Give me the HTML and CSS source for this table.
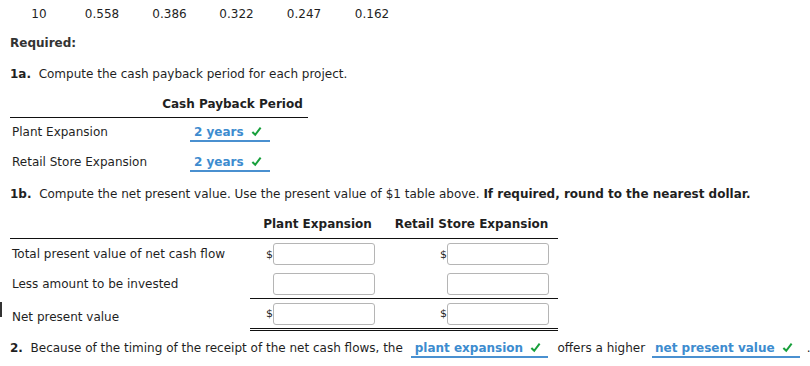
FILE: index.html
```html
<!DOCTYPE html>
<html>
<head>
<meta charset="utf-8">
<link rel="stylesheet" href="styles.css">
</head>
<body>
<div class="page">
  <div class="pv-row">
    <span class="pv c1">10</span>
    <span class="pv c2">0.558</span>
    <span class="pv c3">0.386</span>
    <span class="pv c4">0.322</span>
    <span class="pv c5">0.247</span>
    <span class="pv c6">0.162</span>
  </div>
  <div class="required">Required:</div>
  <div class="q q1a"><b>1a.</b>&nbsp; Compute the cash payback period for each project.</div>

  <div class="pb-table">
    <div class="pb-head">
      <span class="pb-label"></span>
      <span class="pb-col hd">Cash Payback Period</span>
    </div>
    <div class="pb-row">
      <span class="pb-label">Plant Expansion</span>
      <span class="pb-col"><span class="ans ans-pb">2 years <svg class="chk" viewBox="0 0 12 12"><path d="M1.5 6.5 L4.6 9.6 L10.5 1.8" /></svg></span></span>
    </div>
    <div class="pb-row">
      <span class="pb-label">Retail Store Expansion</span>
      <span class="pb-col"><span class="ans ans-pb">2 years <svg class="chk" viewBox="0 0 12 12"><path d="M1.5 6.5 L4.6 9.6 L10.5 1.8" /></svg></span></span>
    </div>
  </div>

  <div class="q q1b"><b>1b.</b>&nbsp; Compute the net present value. Use the present value of $1 table above. <b>If required, round to the nearest dollar.</b></div>

  <div class="npv">
    <div class="npv-head">
      <span class="npv-label"></span>
      <span class="npv-c1 hd">Plant Expansion</span>
      <span class="npv-c2 hd">Retail Store Expansion</span>
    </div>
    <div class="npv-row">
      <span class="npv-label">Total present value of net cash flow</span>
      <span class="npv-vals">
        <span class="npv-c1 cell"><span class="dollar">$</span><span class="box"></span></span>
        <span class="npv-c2 cell"><span class="dollar">$</span><span class="box"></span></span>
      </span>
    </div>
    <div class="npv-row">
      <span class="npv-label">Less amount to be invested</span>
      <span class="npv-vals single">
        <span class="npv-c1 cell"><span class="box"></span></span>
        <span class="npv-c2 cell"><span class="box"></span></span>
      </span>
    </div>
    <div class="npv-row last">
      <span class="cursor"></span>
      <span class="npv-label">Net present value</span>
      <span class="npv-vals double">
        <span class="npv-c1 cell"><span class="dollar">$</span><span class="box"></span></span>
        <span class="npv-c2 cell"><span class="dollar">$</span><span class="box"></span></span>
      </span>
    </div>
  </div>

  <div class="q q2"><b>2.</b>&nbsp; Because of the timing of the receipt of the net cash flows, the <span class="ans ans-a">plant expansion <svg class="chk" viewBox="0 0 12 12"><path d="M1.5 6.5 L4.6 9.6 L10.5 1.8" /></svg></span> offers a higher <span class="ans ans-b">net present value <svg class="chk" viewBox="0 0 12 12"><path d="M1.5 6.5 L4.6 9.6 L10.5 1.8" /></svg></span> .</div>
</div>
</body>
</html>
```

FILE: styles.css
```css
html, body {
  margin: 0;
  padding: 0;
  background: #ffffff;
}
body {
  font-family: "DejaVu Sans", Verdana, sans-serif;
  font-size: 12px;
  color: #1f1f1f;
  width: 810px;
  height: 366px;
  overflow: hidden;
}
.page {
  padding: 0 0 0 10px;
  position: relative;
}
b, .hd { font-weight: bold; }

.pv-row {
  display: flex;
  height: 28px;
  line-height: 28px;
}
.pv { text-align: center; }
.c1 { width: 58px; }
.c2 { width: 68px; }
.c3 { width: 67px; }
.c4 { width: 67px; }
.c5 { width: 68px; }
.c6 { width: 68px; }

.required {
  margin-top: 5px;
  height: 20px;
  line-height: 20px;
  font-weight: bold;
  color: #333;
}
.q {
  height: 20px;
  line-height: 20px;
  white-space: nowrap;
}
.q1a { margin-top: 11px; }

/* payback table */
.pb-table { width: 298px; margin-top: 9px; }
.pb-head {
  display: flex;
  height: 24px;
  line-height: 22px;
  border-bottom: 1px solid #111;
}
.pb-row {
  display: flex;
  height: 30px;
  line-height: 28px;
}
.pb-label { width: 147px; padding-left: 2px; box-sizing: border-box; }
.pb-col { width: 151px; text-align: center; }

.ans {
  display: inline-block;
  color: #3d8ccf;
  font-weight: bold;
  border-bottom: 2px solid #4a90d0;
  line-height: 16px;
  box-sizing: border-box;
}
.ans-pb {
  width: 80px;
  text-align: left;
  padding-left: 4px;
  margin-left: -5px;
}
.chk {
  width: 11px;
  height: 11px;
  vertical-align: -1px;
  margin-left: 3px;
}
.chk path {
  fill: none;
  stroke: #18a03c;
  stroke-width: 2.2;
}

.q1b { margin-top: 6px; }

/* NPV table */
.npv { width: 548px; margin-top: 6px; }
.npv-head {
  display: flex;
  height: 28px;
  line-height: 28px;
  border-bottom: 1px solid #111;
}
.npv-label { width: 240px; padding-left: 2px; box-sizing: border-box; }
.npv-c1 { width: 135px; }
.npv-c2 { width: 173px; }
.npv-head .npv-c1, .npv-head .npv-c2 { text-align: center; }
.npv-row {
  display: flex;
  height: 30px;
  align-items: center;
  position: relative;
}
.npv-vals {
  display: flex;
  height: 30px;
  align-items: center;
  box-sizing: border-box;
}
.npv-vals.single { border-bottom: 1px solid #111; }
.npv-vals.double { border-bottom: 3px double #111; height: 32px; }
.npv-row.last { height: 32px; }
.npv-row.last .npv-label { padding-top: 3px; }
.cell {
  display: flex;
  justify-content: flex-end;
  align-items: center;
}
.npv-c1.cell { padding-right: 10px; box-sizing: border-box; }
.npv-c2.cell { padding-right: 9px; box-sizing: border-box; }
.dollar { margin-right: 0px; font-size: 11px; }
.box {
  display: inline-block;
  width: 102px;
  height: 22px;
  box-sizing: border-box;
  border: 1px solid #b5b5b5;
  border-radius: 3px;
  background: #fff;
}
.cursor {
  position: absolute;
  left: -10px;
  top: 3px;
  width: 2px;
  height: 15px;
  background: #333;
}

.q2 { margin-top: 7px; }
.ans-a {
  width: 137px;
  padding-left: 4px;
  margin-left: 4px;
  margin-right: 6px;
}
.ans-b {
  width: 148px;
  padding-left: 3px;
  margin-left: 3px;
  margin-right: 3px;
}
```
